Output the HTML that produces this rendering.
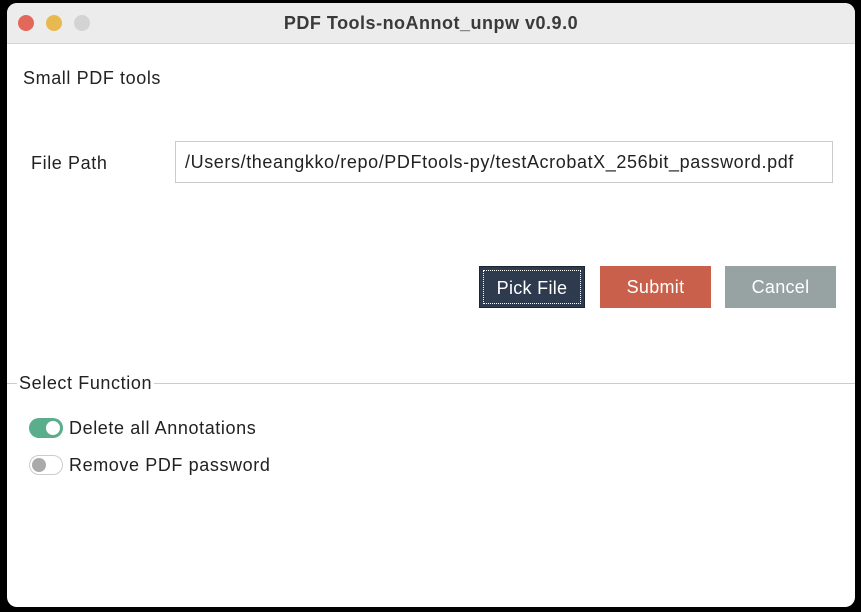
<!DOCTYPE html>
<html><head><style>
html,body{margin:0;padding:0;width:861px;height:612px;background:#000;overflow:hidden;font-family:"Liberation Sans",Arial,sans-serif;}
.win{position:absolute;left:7px;top:3px;width:848px;height:604px;background:#fff;border-radius:10px;overflow:hidden;}
.tb{position:absolute;left:0;top:0;width:100%;height:40px;background:#ececec;border-bottom:1px solid #d6d6d6;}
.dot{position:absolute;top:12px;width:16px;height:16px;border-radius:50%;}
.title{position:absolute;left:0;right:0;top:10px;text-align:center;font-size:18px;letter-spacing:0.5px;font-weight:bold;color:#3a3a3a;}
.t{position:absolute;color:#222;font-size:18px;letter-spacing:0.6px;}
.inp{position:absolute;left:168px;top:138px;width:658px;height:42px;border:1px solid #ccc;box-sizing:border-box;font-size:18px;letter-spacing:0.6px;padding:10px 0 0 9px;color:#222;white-space:nowrap;}
.btn{position:absolute;top:263px;width:111px;height:42px;color:#fff;font-size:18px;letter-spacing:0.3px;text-align:center;line-height:42px;box-sizing:border-box;}
.sw{position:absolute;left:22px;width:34px;height:20px;border-radius:10px;box-sizing:border-box;}
.knob{position:absolute;top:2px;width:14px;height:14px;border-radius:50%;}
</style></head><body>
<div class="win">
<div class="tb">
<div class="dot" style="left:11px;background:#e2685c"></div>
<div class="dot" style="left:39px;background:#e8b94f"></div>
<div class="dot" style="left:67px;background:#d3d3d3"></div>
<div class="title">PDF Tools-noAnnot_unpw v0.9.0</div>
</div>
<div class="t" style="left:16px;top:65px">Small PDF tools</div>
<div class="t" style="left:24px;top:150px">File Path</div>
<div class="inp">/Users/theangkko/repo/PDFtools-py/testAcrobatX_256bit_password.pdf</div>
<div class="btn" style="left:472px;width:106px;background:#2e3b4e;border:1px solid #1d2633;"><div style="position:absolute;inset:3px;border:1px dotted #fff;"></div><span style="position:relative">Pick File</span></div>
<div class="btn" style="left:593px;background:#c9604b">Submit</div>
<div class="btn" style="left:718px;background:#97a3a3">Cancel</div>
<div style="position:absolute;left:0;right:0;top:380px;border-top:1px solid #ccc"></div>
<div class="t" style="left:10px;top:370px;background:#fff;padding:0 2px">Select Function</div>
<div class="sw" style="top:415px;background:#5aae8b"><div class="knob" style="left:17px;top:3px;background:#fff"></div></div>
<div class="t" style="left:62px;top:415px">Delete all Annotations</div>
<div class="sw" style="top:452px;border:1px solid #ccc;background:#fff"><div class="knob" style="left:2px;background:#aaa"></div></div>
<div class="t" style="left:62px;top:452px">Remove PDF password</div>
</div>
</body></html>
